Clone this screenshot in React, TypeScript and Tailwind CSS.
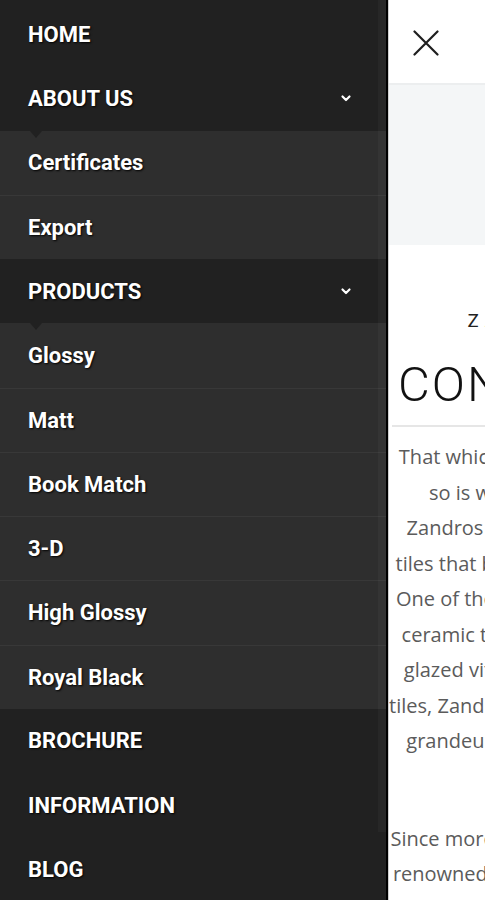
import React from "react";

type Item = { label: string; sub?: string[] };

const items: Item[] = [
  { label: "HOME" },
  { label: "ABOUT US", sub: ["Certificates", "Export"] },
  { label: "PRODUCTS", sub: ["Glossy", "Matt", "Book Match", "3-D", "High Glossy", "Royal Black"] },
  { label: "BROCHURE" },
  { label: "INFORMATION" },
  { label: "BLOG" },
];

const Chevron = () => (
  <svg width="12" height="12" viewBox="0 0 12 12" fill="none" className="ml-auto">
    <path d="M2.5 4.5 L6 8 L9.5 4.5" stroke="#fff" strokeWidth="2.2" strokeLinecap="round" strokeLinejoin="round" />
  </svg>
);

const textCls = "text-[22px] font-bold text-white [text-shadow:1px_1px_2px_rgba(0,0,0,0.95)]";

export default function App() {
  const lines1 = [
    "That which is rare is precious, and that which is so",
    "so is what we believe in at Zandros Ceramic",
    "Zandros Ceramic is a producer of premium floor",
    "tiles that bring elegance and beauty to every home",
    "One of the leading manufacturers of wall and floor",
    "ceramic tiles in Morbi, we manufacture the digital",
    "glazed vitrified tiles and porcelain slabs. With our",
    "tiles, Zandros brings you luxury, style and a sense of",
    "grandeur to your home, office or business space",
  ];
  const lines2 = [
    "Since more than a decade, Zandros Tiles has been a",
    "renowned name in the ceramic industry for quality,",
  ];
  return (
    <div className="flex w-[485px] h-[900px] overflow-hidden bg-white" style={{ fontFamily: "Roboto, 'Liberation Sans', sans-serif" }}>
      {/* Side menu */}
      <nav className="relative w-[388px] shrink-0 bg-[#212121] border-r-2 border-black pt-[2px] overflow-hidden">
        {items.map((it) => (
          <div key={it.label}>
            <div className="h-[64.25px] flex items-center pl-[28px] pr-[34px] border-t border-[#2a2a2a] first:border-t-0 bg-[#212121]">
              <span className={textCls}>{it.label}</span>
              {it.sub && <Chevron />}
            </div>
            {it.sub && (
              <div className="relative bg-[#2e2e2e]">
                <div className="absolute left-[30px] top-0 w-0 h-0 border-l-[6px] border-r-[6px] border-t-[7px] border-l-transparent border-r-transparent border-t-[#212121] z-10" />
                {it.sub.map((s, i) => (
                  <div
                    key={s}
                    className={`h-[64.25px] flex items-center pl-[28px] ${i > 0 ? "border-t border-[#383838]" : ""}`}
                  >
                    <span className={textCls}>{s}</span>
                  </div>
                ))}
              </div>
            )}
          </div>
        ))}
        <div className="absolute right-0 top-0 w-[8px] h-[832px] bg-white/[0.03]" />
      </nav>

      {/* Page content behind */}
      <div className="flex-1 min-w-0 overflow-hidden border-l border-[#cfcfcf]">
        <div className="w-[485px]">
          <div className="h-[83px] flex items-start pl-[24px] pt-[30px] bg-white">
            <svg width="26" height="26" viewBox="0 0 26 26" fill="none">
              <path d="M1.5 1.5 L24.5 24.5 M24.5 1.5 L1.5 24.5" stroke="#1e1e1e" strokeWidth="2.2" strokeLinecap="round" />
            </svg>
          </div>
          <div className="h-[162px] bg-[#f4f6f7] border-t-2 border-[#eceeef]" />
          <div className="pt-[62px] text-center">
            <div className="text-[18px] leading-[26px] text-[#222] tracking-[6.5px] whitespace-nowrap" style={{ fontFamily: "Lato, sans-serif" }}>
              ZANDROS CERAMIC LLP
            </div>
            <div className="mt-[22px] text-[49px] leading-[60px] font-light text-[#111] tracking-[2px] whitespace-nowrap" style={{ fontFamily: "Roboto, sans-serif" }}>
              CONNOISSEURSHIP
            </div>
            <div className="mt-[10px] h-[2px] bg-[#e6e6e6] mx-[3px]" />
            <p className="mt-[12px] text-[20px] leading-[35.5px] text-[#5b5b5b] whitespace-nowrap" style={{ fontFamily: "'Open Sans', sans-serif" }}>
              {lines1.map((l, i) => (
                <React.Fragment key={i}>
                  {l}
                  <br />
                </React.Fragment>
              ))}
            </p>
            <p className="mt-[62px] text-[20px] leading-[35.5px] text-[#5b5b5b] whitespace-nowrap" style={{ fontFamily: "'Open Sans', sans-serif" }}>
              {lines2.map((l, i) => (
                <React.Fragment key={i}>
                  {l}
                  <br />
                </React.Fragment>
              ))}
            </p>
          </div>
        </div>
      </div>
    </div>
  );
}
